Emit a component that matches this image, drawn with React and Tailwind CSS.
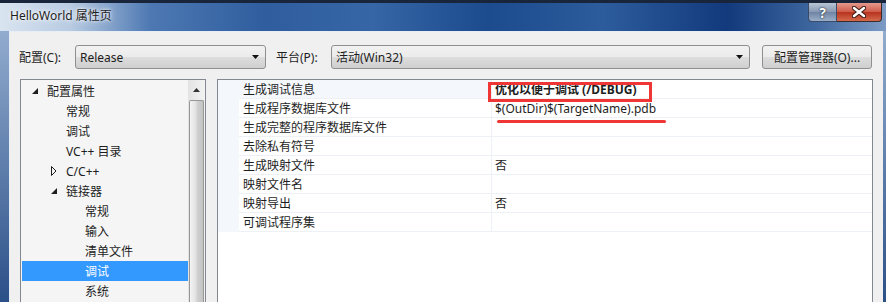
import React from 'react';

const tree = [
  { label: '配置属性', level: 0, toggle: 'open' },
  { label: '常规', level: 1 },
  { label: '调试', level: 1 },
  { label: 'VC++ 目录', level: 1 },
  { label: 'C/C++', level: 1, toggle: 'closed' },
  { label: '链接器', level: 1, toggle: 'open' },
  { label: '常规', level: 2 },
  { label: '输入', level: 2 },
  { label: '清单文件', level: 2 },
  { label: '调试', level: 2, selected: true },
  { label: '系统', level: 2 },
];

const props = [
  { name: '生成调试信息', value: '优化以便于调试 (/DEBUG)', bold: true, boxed: true, active: true },
  { name: '生成程序数据库文件', value: '$(OutDir)$(TargetName).pdb', underline: true },
  { name: '生成完整的程序数据库文件', value: '' },
  { name: '去除私有符号', value: '' },
  { name: '生成映射文件', value: '否' },
  { name: '映射文件名', value: '' },
  { name: '映射导出', value: '否' },
  { name: '可调试程序集', value: '' },
];

const indent = ['pl-[25px]', 'pl-[44px]', 'pl-[63px]'];

const Toggle = ({ kind }) =>
  kind === 'open' ? (
    <svg width="6" height="6" viewBox="0 0 6 6" className="absolute -ml-[15px]">
      <polygon points="6,0 6,6 0,6" fill="#1e1e1e" />
    </svg>
  ) : (
    <svg width="6" height="10" viewBox="0 0 6 10" className="absolute -ml-[15px]">
      <polygon points="0.5,0.5 5,5 0.5,9.5" fill="none" stroke="#1e1e1e" />
    </svg>
  );

const Combo = ({ width, text }) => (
  <div
    className={`${width} h-[24px] flex items-center justify-between pl-[4px] pr-[6px] rounded-[3px] border border-[#8e8f8f] bg-[linear-gradient(to_bottom,#f2f2f2_0%,#ebebeb_50%,#dddddd_51%,#cfcfcf_100%)]`}
  >
    <span className="translate-y-[1px]">{text}</span>
    <svg width="7" height="4" viewBox="0 0 7 4">
      <polygon points="0,0 7,0 3.5,4" fill="#111" />
    </svg>
  </div>
);

export default function App() {
  return (
    <div className="w-[886px] h-[302px] overflow-hidden flex flex-col bg-[linear-gradient(to_bottom,#9db6d6,#2b5088)] text-[12px] text-[#1e1e1e] font-['Noto_Sans','Noto_Sans_CJK_SC',sans-serif]">
      {/* title bar */}
      <div className="h-[31px] shrink-0 flex border-t-[3px] border-[#18253a] bg-[linear-gradient(to_right,#d9e4f0_0%,#b8cbe2_8%,#4d78b2_17%,#2f5d9e_30%,#3766a6_42%,#1c4b8e_55%,#2d5c9c_68%,#123a7c_82%,#3f679f_92%,#7d9bc4_100%)]">
        <div className="pl-[10px] pt-[4px] [text-shadow:0_0_6px_#fff,0_0_3px_#fff]">HelloWorld 属性页</div>
        <div className="ml-auto mr-[4px] flex h-[19px]">
          <div className="w-[29px] flex items-center justify-center border border-t-0 border-[#3b4c68] rounded-bl-[4px] bg-[linear-gradient(to_bottom,#b8c5d6,#8798b2_50%,#6f84a4_51%,#9aaec8)] text-white font-bold text-[14px] [text-shadow:0_0_2px_#1a2636,0_0_1px_#1a2636]">
            ?
          </div>
          <div className="w-[45px] flex items-center justify-center border border-t-0 border-l-0 border-[#3b2a2a] rounded-br-[4px] bg-[linear-gradient(to_bottom,#e39a8e,#cf5a48_50%,#b8321f_51%,#d36a4c)]">
            <svg width="14" height="12" viewBox="0 0 14 12">
              <path d="M2 2 L12 10 M12 2 L2 10" stroke="#3a1a14" strokeWidth="4.5" strokeLinecap="round" />
              <path d="M2 2 L12 10 M12 2 L2 10" stroke="#fff" strokeWidth="2.5" strokeLinecap="round" />
            </svg>
          </div>
        </div>
      </div>

      {/* client area */}
      <div className="flex-1 min-h-0 ml-[9px] mr-[3px] flex flex-col bg-[#f0f0f0] border-l border-t border-[#e8eef6] pt-[13px]">
        <div className="flex items-center h-[24px] shrink-0 pl-[9px]">
          <span className="w-[56px] translate-y-[1px]">配置(C):</span>
          <Combo width="w-[191px]" text="Release" />
          <span className="ml-[10px] w-[55px] translate-y-[1px]">平台(P):</span>
          <Combo width="w-[419px]" text="活动(Win32)" />
          <button className="ml-[12px] w-[110px] h-[24px] pt-[1px] rounded-[3px] border border-[#8e8f8f] bg-[linear-gradient(to_bottom,#f2f2f2_0%,#ebebeb_50%,#dddddd_51%,#cfcfcf_100%)]">
            配置管理器(O)...
          </button>
        </div>

        <div className="flex-1 min-h-0 flex mt-[10px] pl-[10px]">
          {/* tree */}
          <div className="w-[186px] flex border border-b-0 border-[#828790] bg-[#f5f5f5]">
            <div className="flex-1 pl-[1px] pt-[1px]">
              {tree.map((t, i) => (
                <div
                  key={i}
                  className={`h-[20px] flex items-center ${indent[t.level]} ${t.selected ? 'bg-[#3399ff] text-white' : ''}`}
                >
                  {t.toggle && <Toggle kind={t.toggle} />}
                  <span className="translate-y-[1px]">{t.label}</span>
                </div>
              ))}
            </div>
            <div className="w-[17px] flex flex-col bg-[linear-gradient(to_right,#e3e3e3,#f3f3f3)] pt-[1px]">
              <div className="h-[17px] flex items-center justify-center">
                <svg width="7" height="4" viewBox="0 0 7 4">
                  <polygon points="3.5,0 7,4 0,4" fill="#333" />
                </svg>
              </div>
              <div className="flex-1 mt-[2px] mx-[1px] rounded-t-[2px] border border-b-0 border-[#979797] bg-[linear-gradient(to_right,#f4f4f4,#e4e4e4_40%,#cfcfcf_60%,#c3c3c3)]" />
            </div>
          </div>

          {/* property grid */}
          <div className="ml-[11px] w-[656px] border border-b-0 border-[#828790] bg-white">
            {props.map((p, i) => (
              <div key={i} className="h-[19px] flex">
                <div className="w-[21px] bg-[#f4f7fc]" />
                <div
                  className={`w-[253px] flex items-center pl-[4px] pt-[2px] border-b border-r border-[#edf0f5] ${p.active ? 'bg-[#f4f7fc]' : ''}`}
                >
                  {p.name}
                </div>
                <div
                  className={`relative flex-1 flex items-center pl-[3px] pt-[2px] border-b border-[#edf0f5] ${p.bold ? 'font-bold' : ''}`}
                >
                  {p.value}
                  {p.boxed && (
                    <div className="absolute left-[-4px] top-[2px] w-[164px] h-[20px] border-[3px] border-[#f03535]" />
                  )}
                  {p.underline && (
                    <div className="absolute left-[5px] top-[21px] w-[169px] h-[3px] rounded-full bg-[#f03535]" />
                  )}
                </div>
              </div>
            ))}
          </div>
        </div>
      </div>
    </div>
  );
}
